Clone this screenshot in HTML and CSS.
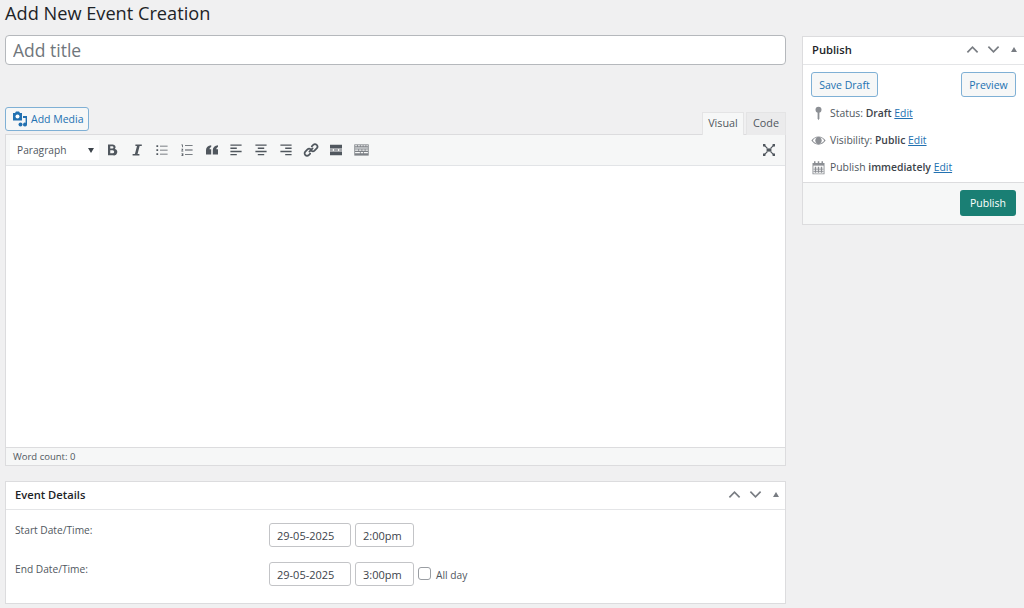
FILE: index.html
```html
<!DOCTYPE html>
<html lang="en">
<head>
<meta charset="utf-8">
<title>Add New Event Creation</title>
<link rel="stylesheet" href="styles.css">
</head>
<body>
<h1 class="page-title">Add New Event Creation</h1>
<div class="columns">
  <main class="main-col">
    <input class="title-input" type="text" placeholder="Add title">
    <div class="editor-tools">
      <button class="btn media-btn" type="button">
        <svg class="media-icon" width="16" height="16" viewBox="0 0 16 16"><path fill="#2271b1" d="M1 2h2l1-1.500h3L8 2h2v7.500H1z"/><circle cx="5.500" cy="5.500" r="2" fill="#fff"/><path fill="#2271b1" d="M11 5h4v8.500a2 2 0 1 1-1.400-1.800V7h-2.600z"/><circle cx="8.500" cy="13.500" r="2" fill="#2271b1"/></svg>
        Add Media
      </button>
      <div class="tabs">
        <span class="tab active">Visual</span>
        <span class="tab code">Code</span>
      </div>
    </div>
    <div class="editor">
      <div class="toolbar">
        <div class="format-select">Paragraph<span class="caret"></span></div>
        <div class="tool-icons">
          <svg class="ti" viewBox="0 0 20 20"><path fill="#50575e" d="M5 3h6a3.500 3.500 0 0 1 2.600 5.800A3.800 3.800 0 0 1 11.500 16.500H5zm2.800 2.300v2.900h2.600a1.450 1.450 0 0 0 0-2.900zm0 5.100v3.800h3a1.900 1.900 0 0 0 0-3.800z"/></svg>
          <svg class="ti" viewBox="0 0 20 20"><path fill="#50575e" d="M8 3h8v2h-2.700l-2.600 10H13v2H4.500v-2h2.900l2.600-10H8z"/></svg>
          <svg class="ti" viewBox="0 0 20 20"><path fill="#50575e" d="M3 4h2.200v2.200H3zm4.500 .6H17v1.100H7.500zM3 9h2.200v2.200H3zm4.500 .6H17v1.100H7.500zM3 14h2.200v2.200H3zm4.500 .6H17v1.100H7.500z"/></svg>
          <svg class="ti" viewBox="0 0 20 20"><path fill="#50575e" d="M3 3h1.800v3.500H3.800V4H3zm4.500 1H17v1H7.500zM3 8.500h2.200v1L4 11h1.400v1H3v-1l1.200-1.500H3zM7.500 9.500H17v1H7.500zM3 14h2.400v3.500H3v-.8h1.400v-.6H3.500v-.7h.9v-.6H3zm4.500 1H17v1H7.500z"/></svg>
          <svg class="ti" viewBox="0 0 20 20"><path fill="#50575e" d="M9 4v2.400C7.400 6.900 7 8 7 9h2v6.500H2.500V10C2.500 6.500 5 4.300 9 4zm8.500 0v2.400c-1.600.5-2 1.600-2 2.600h2v6.500H11V10c0-3.500 2.500-5.700 6.500-6z"/></svg>
          <svg class="ti" viewBox="0 0 20 20"><path fill="#50575e" d="M3 3h14v1.700H3zm0 4h8v1.700H3zm0 4h14v1.700H3zm0 4h8v1.700H3z"/></svg>
          <svg class="ti" viewBox="0 0 20 20"><path fill="#50575e" d="M3 3h14v1.700H3zm3 4h8v1.700H6zm-3 4h14v1.700H3zm3 4h8v1.700H6z"/></svg>
          <svg class="ti" viewBox="0 0 20 20"><path fill="#50575e" d="M3 3h14v1.700H3zm6 4h8v1.700H9zm-6 4h14v1.700H3zm6 4h8v1.700H9z"/></svg>
          <svg class="ti" viewBox="0 0 20 20"><g fill="none" stroke="#50575e" stroke-width="2.200" stroke-linecap="round"><path d="M8 12l4-4"/><path d="M11 5.500l1.800-1.800a3 3 0 0 1 4.300 4.300l-2.700 2.700a3 3 0 0 1-3.900.300"/><path d="M9 14.500l-1.800 1.800a3 3 0 0 1-4.300-4.300l2.700-2.700a3 3 0 0 1 3.900-.300"/></g></svg>
          <svg class="ti" viewBox="0 0 20 20"><path fill="#50575e" d="M2.500 3.500h15V8h-15zM2.500 9.500H6v1.200H2.500zm5 0h5v1.200h-5zm6.500 0h3.500v1.200H14zM2.500 12h15v4.500h-15z"/></svg>
          <svg class="ti wide" viewBox="0 0 20 20"><path fill="#7d8186" d="M1 3h18v14H1z"/><path fill="#f6f7f7" d="M2 4h2.500v1.300H2zm3.500 0H8v1.300H5.500zM9 4h2.500v1.300H9zm3.500 0H15v1.300h-2.500zM16 4h2v1.300h-2zM2 7h16v1H2zm0 2.500h4V11H2zm5 0h3V11H7zm4 0h3V11h-3zm4 0h3V11h-3zM2 12.500h6V14H2zm7 0h3V14H9zm4 0h5V14h-5z"/></svg>
        </div>
        <svg class="fullscreen" viewBox="0 0 20 20"><path fill="#50575e" d="M7 8h6v4H7z"/><path stroke="#50575e" stroke-width="1.500" d="M4 4l4 4m8-4l-4 4M4 16l4-4m8 4l-4-4"/><path fill="#50575e" d="M2.500 2.500h3v3h-3zm12 0h3v3h-3zm-12 12h3v3h-3zm12 0h3v3h-3z"/></svg>
      </div>
      <div class="edit-area"></div>
      <div class="status-bar">Word count: 0</div>
    </div>
    <section class="box details">
      <header class="box-head">
        <h2>Event Details</h2>
        <div class="handles">
          <svg class="chev" viewBox="0 0 14 9"><path d="M1.500 7.500L7 2l5.500 5.500"/></svg>
          <svg class="chev" viewBox="0 0 14 9"><path d="M1.500 1.500L7 7l5.500-5.500"/></svg>
          <span class="tri"></span>
        </div>
      </header>
      <div class="details-body">
        <div class="row">
          <span class="row-label">Start Date/Time:</span>
          <input class="field date" type="text" value="29-05-2025">
          <input class="field time" type="text" value="2:00pm">
        </div>
        <div class="row">
          <span class="row-label">End Date/Time:</span>
          <input class="field date" type="text" value="29-05-2025">
          <input class="field time" type="text" value="3:00pm">
          <span class="checkbox"></span>
          <span class="all-day">All day</span>
        </div>
      </div>
    </section>
  </main>
  <aside class="box side">
    <header class="box-head">
      <h2>Publish</h2>
      <div class="handles">
        <svg class="chev" viewBox="0 0 14 9"><path d="M1.500 7.500L7 2l5.500 5.500"/></svg>
        <svg class="chev" viewBox="0 0 14 9"><path d="M1.500 1.500L7 7l5.500-5.500"/></svg>
        <span class="tri"></span>
      </div>
    </header>
    <div class="pub-body">
      <div class="pub-btns">
        <button class="btn draft" type="button">Save Draft</button>
        <button class="btn preview" type="button">Preview</button>
      </div>
      <div class="pub-line">
        <svg class="pub-icon" viewBox="0 0 20 20"><circle cx="10" cy="5" r="4" fill="#8c8f94"/><path fill="#8c8f94" d="M8.800 8h2.400v8.500L10 19l-1.200-2.500z"/></svg>
        <span>Status: <b>Draft</b> <a href="#">Edit</a></span>
      </div>
      <div class="pub-line">
        <svg class="pub-icon" viewBox="0 0 20 20"><path fill="#8c8f94" d="M10 4.500c4 0 7.500 2.500 9.500 5.500-2 3-5.500 5.500-9.500 5.500S2.500 13 .5 10C2.500 7 6 4.500 10 4.500zM2.500 10c1.200 2.200 3.500 3.800 6 4.200a4.500 4.500 0 0 1 0-8.400c-2.500.4-4.800 2-6 4.200zm9 4.200c2.500-.4 4.800-2 6-4.200-1.200-2.200-3.500-3.800-6-4.200a4.500 4.500 0 0 1 0 8.400z"/><circle cx="10" cy="10" r="2.800" fill="#8c8f94"/></svg>
        <span>Visibility: <b>Public</b> <a href="#">Edit</a></span>
      </div>
      <div class="pub-line">
        <svg class="pub-icon" viewBox="0 0 20 20"><path fill="#8c8f94" d="M2 4h2V1.500h2V4h3V1.500h2V4h3V1.500h2V4h2v15H2z"/><path fill="#fff" d="M3.200 7.500h13.600V18H3.200z"/><path fill="#8c8f94" d="M5 9h2v8H5zm4 0h2v8H9zm4 0h2v8h-2zM3.200 11.500h13.600v1H3.200zm0 3h13.600v1H3.200z"/></svg>
        <span>Publish <b>immediately</b> <a href="#">Edit</a></span>
      </div>
    </div>
    <div class="pub-foot">
      <button class="publish" type="button">Publish</button>
    </div>
  </aside>
</div>
</body>
</html>
```
FILE: styles.css
```css
* { box-sizing: border-box; }
html, body { margin: 0; height: 608px; overflow: hidden; }
body {
  background: #f0f0f1;
  color: #3c434a;
  font: 13px/1.4 "Open Sans", sans-serif;
  padding-left: 5px;
}
.page-title {
  margin: 0;
  height: 36px;
  padding-top: 1px;
  font-size: 18.200px;
  line-height: 25px;
  font-weight: 400;
  color: #1d2327;
}
.columns { display: flex; gap: 16px; align-items: flex-start; }
.main-col { width: 781px; flex: none; }
.title-input {
  display: block;
  width: 100%;
  height: 30px;
  padding: 0 7px;
  margin-top: -1px;
  border: 1px solid #b5b8bc;
  border-radius: 4px;
  background: #fff;
  font: 17.500px "Open Sans", sans-serif;
  color: #3c434a;
}
.title-input::placeholder { color: #70767c; opacity: 1; }
.editor-tools {
  display: flex;
  justify-content: space-between;
  align-items: flex-end;
  margin-top: 42px;
  height: 28px;
}
.btn {
  height: 25px;
  padding: 0;
  border: 1px solid #7fb0d5;
  border-radius: 3px;
  background: #f6f7f7;
  color: #2271b1;
  font: 10.500px "Open Sans", sans-serif;
}
.media-btn {
  display: flex;
  align-items: center;
  height: 24px;
  width: 84px;
  margin-bottom: 4px;
  padding: 0 6px;
  white-space: nowrap;
}
.media-icon { flex: none; margin-right: 3px; }
.tabs { display: flex; gap: 2px; align-items: flex-end; }
.tab {
  width: 40px;
  height: 23px;
  text-align: center;
  font-size: 10.800px;
  line-height: 19px;
  color: #50575e;
  background: #ebebec;
  border: 1px solid #e4e4e5;
  border-bottom: 0;
}
.tab.active {
  width: 42px;
  background: #f6f7f7;
}
.editor {
  border: 1px solid #dcdcde;
  background: #fff;
  margin-top: -1px;
}
.toolbar {
  display: flex;
  align-items: center;
  height: 31px;
  padding: 0 8px 0 4px;
  background: #f6f7f7;
  border-bottom: 1px solid #e2e4e7;
}
.format-select {
  position: relative;
  width: 89px;
  height: 20px;
  padding-left: 7px;
  background: #fff;
  font-size: 10.200px;
  line-height: 20px;
  color: #50575e;
}
.caret {
  position: absolute;
  right: 5px;
  top: 8px;
  border: 3.500px solid transparent;
  border-top: 5px solid #3c434a;
  border-bottom: 0;
}
.tool-icons {
  display: flex;
  align-items: center;
  gap: 8.900px;
  margin-left: 5px;
  flex: 1;
}
.ti { width: 16px; height: 16px; flex: none; }
.ti.wide { width: 17px; }
.fullscreen { width: 16px; height: 16px; flex: none; }
.edit-area { height: 281px; background: #fff; }
.status-bar {
  height: 18px;
  padding-left: 7px;
  background: #f6f7f7;
  border-top: 1px solid #dcdcde;
  font-size: 9.500px;
  line-height: 17px;
  color: #50575e;
}
.box {
  background: #fff;
  border: 1px solid #dcdcde;
}
.details { margin-top: 15px; height: 123px; }
.box-head {
  display: flex;
  justify-content: space-between;
  align-items: center;
  height: 28px;
  padding: 0 6px 2px 9px;
  border-bottom: 1px solid #e4e5e7;
}
.box-head h2 {
  margin: 0;
  font-size: 11.200px;
  font-weight: 600;
  color: #1d2327;
}
.handles { display: flex; align-items: center; gap: 8px; }
.chev { width: 13px; height: 9px; fill: none; stroke: #787c82; stroke-width: 1.800; }
.tri {
  width: 0;
  margin-left: 3px;
  border: 3.500px solid transparent;
  border-bottom: 5px solid #787c82;
  border-top: 0;
}
.details-body { padding: 13px 9px 0; }
.row {
  display: flex;
  align-items: flex-start;
  height: 39px;
  font-size: 10.200px;
}
.row-label { width: 254px; flex: none; color: #50575e; }
.field {
  height: 24px;
  border: 1px solid #c3c4c7;
  border-radius: 3px;
  background: #fff;
  padding: 0 7px;
  font: 11px "Open Sans", sans-serif;
  color: #3c434a;
  margin-right: 4px;
}
.date { width: 82px; }
.time { width: 59px; }
.checkbox {
  width: 13px;
  height: 13px;
  margin-top: 5px;
  border: 1px solid #9a9ea3;
  border-radius: 3px;
  background: #fff;
}
.all-day { margin: 6px 0 0 5px; line-height: 15px; color: #50575e; }
.side { width: 240px; flex: none; }
.side .box-head { width: 222px; padding-right: 8px; }
.pub-body { padding: 7px 8px 0; }
.pub-btns { display: flex; justify-content: space-between; width: 205px; margin-bottom: 3px; }
.draft { width: 67px; }
.preview { width: 55px; }
.pub-line {
  display: flex;
  align-items: center;
  gap: 4px;
  height: 27px;
  font-size: 10.400px;
  color: #50575e;
}
.pub-line b { font-weight: 600; color: #3c434a; }
.pub-line a { color: #2271b1; }
.pub-icon { width: 15px; height: 15px; flex: none; }
.pub-foot {
  display: flex;
  justify-content: flex-end;
  width: 222px;
  height: 42px;
  margin-top: 1px;
  padding: 7px 9px 0 0;
  background: #f6f7f7;
  border-top: 1px solid #dcdcde;
}
.publish {
  width: 56px;
  height: 26px;
  border: 0;
  border-radius: 3px;
  background: #1a7f74;
  color: #fff;
  font: 10.500px "Open Sans", sans-serif;
}
```
